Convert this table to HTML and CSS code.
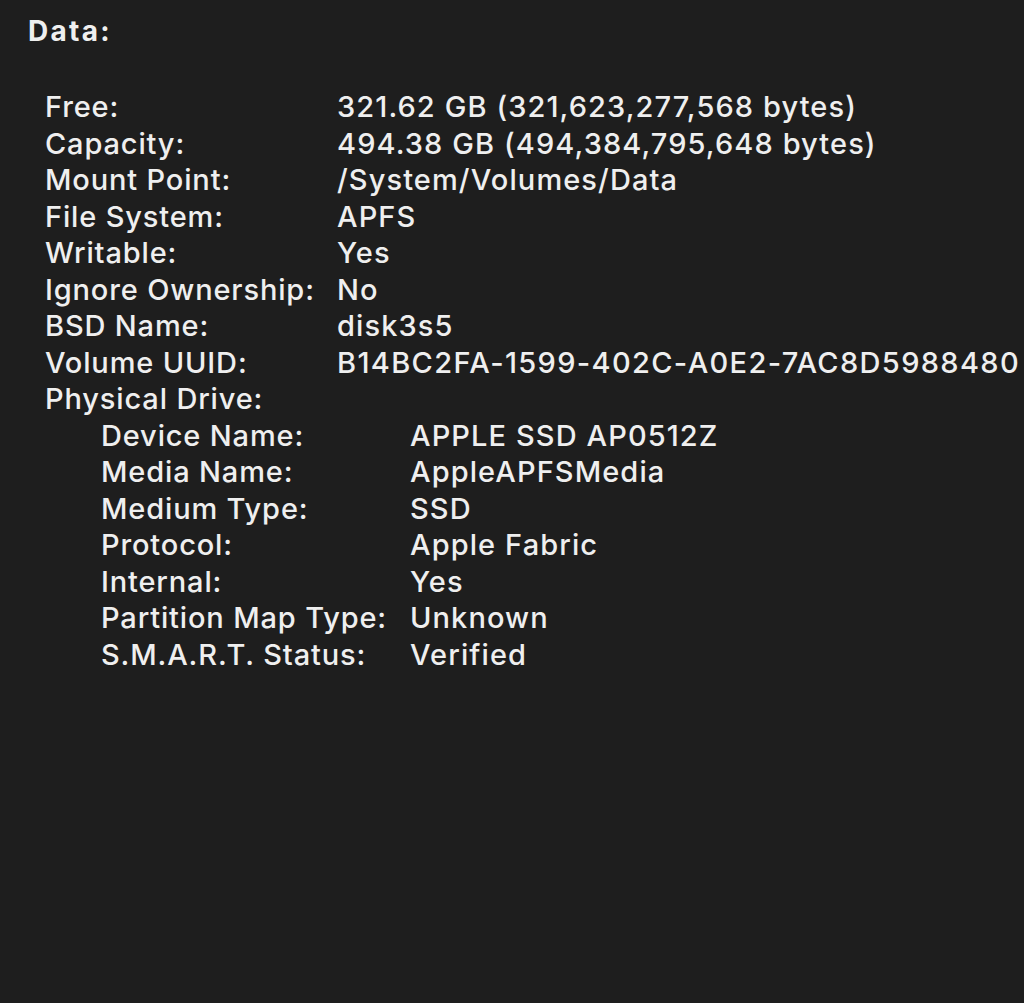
FILE: index.html
```html
<!DOCTYPE html>
<html>
<head>
<meta charset="utf-8">
<link rel="stylesheet" href="styles.css">
</head>
<body>
<div class="panel">
  <div class="title">Data:</div>
  <div class="grid">
    <div class="label">Free:</div><div class="value">321.62 GB (321,623,277,568 bytes)</div>
    <div class="label">Capacity:</div><div class="value">494.38 GB (494,384,795,648 bytes)</div>
    <div class="label">Mount Point:</div><div class="value">/System/Volumes/Data</div>
    <div class="label">File System:</div><div class="value">APFS</div>
    <div class="label">Writable:</div><div class="value">Yes</div>
    <div class="label">Ignore Ownership:</div><div class="value">No</div>
    <div class="label">BSD Name:</div><div class="value">disk3s5</div>
    <div class="label">Volume UUID:</div><div class="value uuid">B14BC2FA-1599-402C-A0E2-7AC8D5988480</div>
    <div class="label full">Physical Drive:</div>
  </div>
  <div class="grid nested">
    <div class="label">Device Name:</div><div class="value">APPLE SSD AP0512Z</div>
    <div class="label">Media Name:</div><div class="value">AppleAPFSMedia</div>
    <div class="label">Medium Type:</div><div class="value">SSD</div>
    <div class="label">Protocol:</div><div class="value">Apple Fabric</div>
    <div class="label">Internal:</div><div class="value">Yes</div>
    <div class="label">Partition Map Type:</div><div class="value">Unknown</div>
    <div class="label">S.M.A.R.T. Status:</div><div class="value">Verified</div>
  </div>
</div>
</body>
</html>
```

FILE: styles.css
```css
html, body {
  margin: 0;
  padding: 0;
  background: #1e1e1e;
}
body {
  width: 1024px;
  height: 1003px;
  overflow: hidden;
}
.panel {
  padding: 13px 0 0 28px;
  font-family: Inter, "Liberation Sans", sans-serif;
  font-size: 29px;
  font-weight: 500;
  letter-spacing: 1.1px;
  line-height: 36.5px;
  color: #efefef;
  white-space: nowrap;
}
.title {
  font-weight: 700;
  font-size: 28px;
  letter-spacing: 2.3px;
  margin-bottom: 39.5px;
}
.grid {
  display: grid;
  grid-template-columns: 292px auto;
  padding-left: 17px;
}
.label {
  letter-spacing: 0.85px;
}
.uuid {
  letter-spacing: 1.35px;
}
.grid .full {
  grid-column: 1 / span 2;
}
.grid.nested {
  grid-template-columns: 309px auto;
  padding-left: 73px;
}
```
